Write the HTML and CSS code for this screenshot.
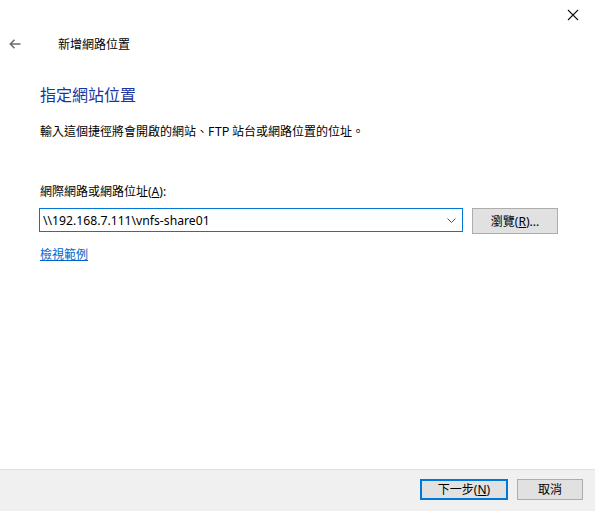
FILE: index.html
```html
<!DOCTYPE html>
<html lang="zh-Hant">
  <head>
    <meta charset="UTF-8" />
    <title>新增網路位置</title>
    <link rel="stylesheet" href="styles.css">
  </head>
  <body>
    <div class="dialog">
      <div class="titleBar">
        <span class="closeBtn">
          <svg width="12" height="12" viewBox="0 0 12 12">
            <path d="M1 1 L11 11 M11 1 L1 11" stroke="#111" stroke-width="1.1" fill="none" />
          </svg>
        </span>
      </div>

      <div class="wizardHeader">
        <span class="backBtn">
          <svg width="12" height="10" viewBox="0 0 12 10">
            <path d="M11.5 5 H1.5 M5.5 0.8 L1.3 5 L5.5 9.2" stroke="#6e6e6e" stroke-width="1.6" fill="none" />
          </svg>
        </span>
        <span class="wizardTitle">新增網路位置</span>
      </div>

      <div class="content">
        <h2>指定網站位置</h2>
        <p class="desc">輸入這個捷徑將會開啟的網站、FTP 站台或網路位置的位址。</p>

        <label class="fieldLabel" for="address">網際網路或網路位址(<u>A</u>):</label>
        <div class="fieldRow">
          <div class="comboBox">
            <input type="text" id="address" value="\\192.168.7.111\vnfs-share01" />
            <svg class="chevron" width="9" height="5" viewBox="0 0 9 5">
              <path d="M0.5 0.5 L4.5 4.5 L8.5 0.5" stroke="#555" stroke-width="1" fill="none" />
            </svg>
          </div>
          <button class="btn browseBtn">瀏覽(<u>R</u>)...</button>
        </div>

        <a class="exampleLink" href="#">檢視範例</a>
      </div>

      <div class="footer">
        <button class="btn defaultBtn">下一步(<u>N</u>)</button>
        <button class="btn cancelBtn">取消</button>
      </div>
    </div>
  </body>
</html>
```

FILE: styles.css
```css
body {
  margin: 0;
  font-family: "Noto Sans", "Noto Sans CJK TC", sans-serif;
  font-size: 12px;
  color: #000;
  background: #fff;
}

.dialog {
  width: 595px;
  height: 511px;
  display: flex;
  flex-direction: column;
}

.titleBar {
  height: 30px;
  display: flex;
  justify-content: flex-end;
  align-items: center;
}
.closeBtn {
  width: 34px;
  display: flex;
  justify-content: center;
  padding-right: 5px;
  padding-bottom: 1px;
}

.wizardHeader {
  height: 28px;
  display: flex;
  align-items: center;
}
.backBtn {
  width: 30px;
  display: flex;
  justify-content: center;
}
.wizardTitle {
  margin-left: 28px;
  font-family: "Noto Sans CJK TC", sans-serif;
  font-size: 12px;
  line-height: 18px;
}

.content {
  flex: 1;
  padding-left: 40px;
}

h2 {
  margin: 25px 0 0;
  font-family: "Noto Sans CJK TC", sans-serif;
  font-size: 16px;
  font-weight: normal;
  line-height: 22px;
  color: #1a35a0;
}

.desc {
  margin: 17px 0 0;
  font-family: "Noto Sans CJK TC", sans-serif;
  line-height: 18px;
}

.fieldLabel {
  display: block;
  margin-top: 43px;
  line-height: 18px;
}

.fieldRow {
  display: flex;
  align-items: flex-start;
  margin-top: 7px;
}
.comboBox {
  width: 424px;
  height: 24px;
  margin-left: -1px;
  box-sizing: border-box;
  border: 1px solid #0078d7;
  display: flex;
  align-items: center;
}
.comboBox input {
  flex: 1;
  border: none;
  outline: none;
  padding: 0 3px;
  font-family: "Noto Sans", "Noto Sans CJK TC", sans-serif;
  font-size: 12.2px;
  color: #000;
  background: transparent;
}
.chevron {
  margin: 0 6px 0 4px;
}

.btn {
  box-sizing: border-box;
  height: 21px;
  padding: 0;
  border: 1px solid #adadad;
  background: #e1e1e1;
  font-family: "Noto Sans", "Noto Sans CJK TC", sans-serif;
  font-size: 12px;
  color: #000;
  line-height: 17px;
}
.browseBtn {
  width: 86px;
  height: 26px;
  margin-left: 9px;
}

.exampleLink {
  display: inline-block;
  margin-top: 12px;
  line-height: 18px;
  color: #0066cc;
  text-decoration: underline;
}

.footer {
  height: 42px;
  box-sizing: border-box;
  border-top: 1px solid #dfdfdf;
  background: #f0f0f0;
  display: flex;
  justify-content: flex-end;
  align-items: flex-start;
  padding: 9px 12px 0 0;
  gap: 9px;
}
.defaultBtn {
  width: 88px;
  border: 2px solid #0078d7;
}
.cancelBtn {
  width: 66px;
}
```
